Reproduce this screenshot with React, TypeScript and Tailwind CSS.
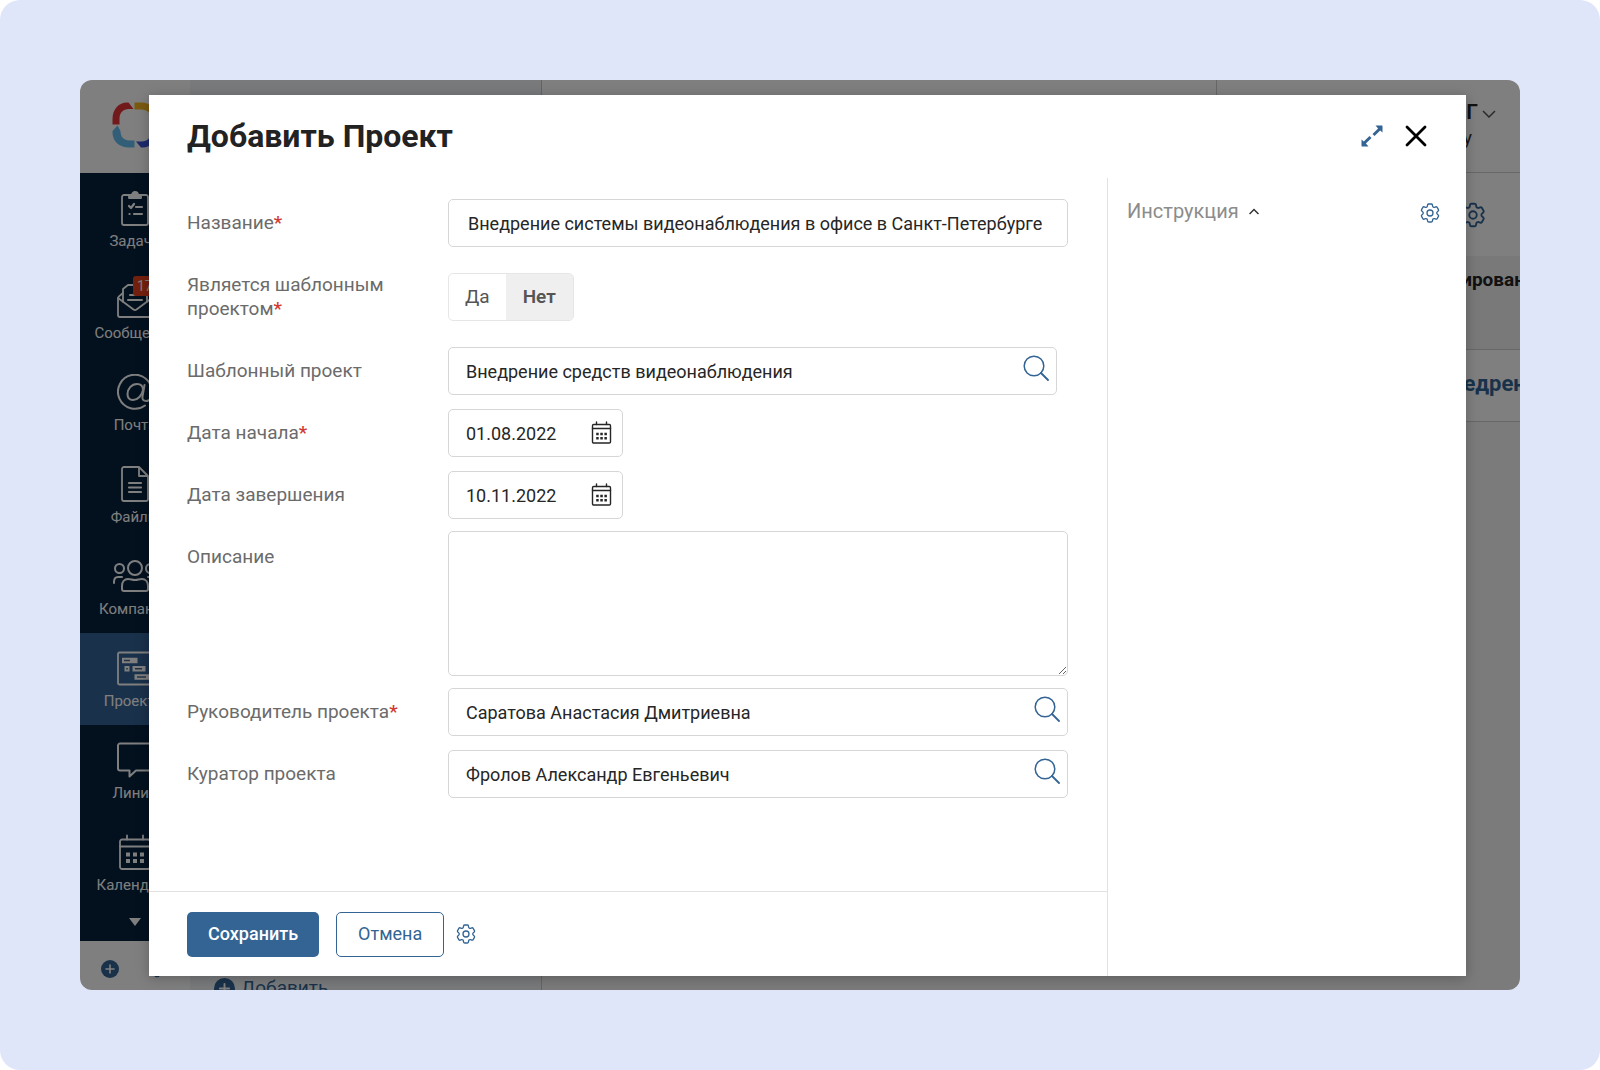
import { useState } from "react";
import type { ReactNode } from "react";
import { HiOutlineCog6Tooth } from "react-icons/hi2";

const FIELD =
  "h-12 rounded-[5px] border border-[#d6d6d6] bg-white text-[18px] leading-6 text-[#262626] outline-none";

function ClipboardIcon() {
  return (
    <svg width="36" height="36" viewBox="0 0 36 36" fill="none" stroke="currentColor" strokeWidth="1.8" strokeLinejoin="round" strokeLinecap="round">
      <path d="M12 5H7a2 2 0 0 0-2 2v26a2 2 0 0 0 2 2h22a2 2 0 0 0 2-2V7a2 2 0 0 0-2-2h-5" />
      <path d="M12 8V5h3a3 3 0 0 1 6 0h3v3z" fill="currentColor" />
      <path d="m12 16 2 2 3-4M19 17h6M12.500 24h.1M17 24h8" strokeWidth="2.200" />
    </svg>
  );
}

function MailIcon() {
  return (
    <svg width="36" height="36" viewBox="0 0 36 36" fill="none" stroke="currentColor" strokeWidth="1.8" strokeLinejoin="round" strokeLinecap="round">
      <path d="M6 11 3 13.500a4 4 0 0 0-2 3V33a2 2 0 0 0 2 2h30a2 2 0 0 0 2-2V16.500a4 4 0 0 0-2-3L30 11" />
      <path d="M6 20V7l5-4h14l5 4v13M1 16l15.500 11.500a2.500 2.500 0 0 0 3 0L35 16" />
      <path d="M13 13h11M11 18h14" strokeWidth="2" />
    </svg>
  );
}

function AtIcon() {
  return (
    <svg width="36" height="36" viewBox="0 0 36 36" fill="none" stroke="currentColor" strokeWidth="2" strokeLinecap="round">
      <path d="M28 31.500A17 17 0 1 1 35 18c0 5-2 9-6 9-2.500 0-4-1.500-3.500-4.500L27.500 11" />
      <path d="M26 16c0-4-2.500-6-6-6-5.500 0-9.500 5-9.500 10 0 4 2.500 6 5.500 6 5 0 9-4.500 10-10Z" />
    </svg>
  );
}

function FileIcon() {
  return (
    <svg width="36" height="36" viewBox="0 0 36 36" fill="none" stroke="currentColor" strokeWidth="1.800" strokeLinejoin="round" strokeLinecap="round">
      <path d="M22 1H7a2 2 0 0 0-2 2v30a2 2 0 0 0 2 2h22a2 2 0 0 0 2-2V10zv9h9" />
      <path d="M12 17h12M12 21.500h12M12 26h12" strokeWidth="2.200" />
    </svg>
  );
}

function PeopleIcon() {
  return (
    <svg width="44" height="36" viewBox="0 0 44 36" fill="none" stroke="currentColor" strokeWidth="2" strokeLinejoin="round" strokeLinecap="round">
      <circle cx="22" cy="10" r="7" />
      <circle cx="6.500" cy="10.500" r="4.500" />
      <circle cx="37.500" cy="10.500" r="4.500" />
      <path d="M11 33h22c1.500 0 2-1 2-2v-3c0-4-2.500-7-6-7-3 0-4 1-7 1s-4-1-7-1c-3.500 0-6 3-6 7v3c0 1 .5 2 2 2Z" />
      <path d="M1 25v-1c0-3 1.500-5 4-5h4M43 25v-1c0-3-1.500-5-4-5h-4" />
    </svg>
  );
}

function GanttIcon() {
  return (
    <svg width="36" height="36" viewBox="0 0 36 36" fill="none" stroke="currentColor" strokeWidth="1.800" strokeLinejoin="round">
      <rect x="1" y="2.500" width="34" height="32" rx="1.500" />
      <path d="M5 10.500h15.500M17.500 27h15M15.500 18.800h13M7.500 18.800h5" strokeWidth="5.600" />
      <path d="M7 10.500h6M20 27h9M18 18.800h7M9.200 18.800h1.600" strokeWidth="1.600" stroke="#46678c" />
    </svg>
  );
}

function ChatIcon() {
  return (
    <svg width="36" height="36" viewBox="0 0 36 36" fill="none" stroke="currentColor" strokeWidth="2" strokeLinejoin="round">
      <path d="M3 1.500h30a2 2 0 0 1 2 2v23a2 2 0 0 1-2 2H19L12.500 34.500v-6H3a2 2 0 0 1-2-2v-23a2 2 0 0 1 2-2Z" />
    </svg>
  );
}

function BigCalendarIcon() {
  return (
    <svg width="36" height="36" viewBox="0 0 36 36" fill="none" stroke="currentColor" strokeWidth="1.800" strokeLinejoin="round" strokeLinecap="round">
      <rect x="3" y="5.500" width="30" height="29.500" rx="2" />
      <path d="M3 12.500h30M10 1.500v4M26 1.500v4" />
      <path d="M9 20.500h4M16 20.500h4M23 20.500h4M9 27h4M16 27h4M23 27h4" strokeWidth="4.200" strokeLinecap="butt" />
    </svg>
  );
}

function CalendarIcon() {
  return (
    <svg width="22" height="24" viewBox="0 0 22 24" fill="none" stroke="currentColor" strokeWidth="1.400" strokeLinejoin="round" strokeLinecap="round">
      <rect x="1.500" y="3.500" width="18" height="18.500" rx="1.200" />
      <path d="M1.500 7.500h18M5.500 1v2.500M15.500 1v2.500" />
      <path d="M5.200 13h2.500M9.300 13h2.500M13.400 13h2.500M5.200 17.200h2.500M9.300 17.200h2.500M13.400 17.200h2.500" strokeWidth="2.600" strokeLinecap="butt" />
    </svg>
  );
}

function SearchIcon() {
  return (
    <svg width="26" height="26" viewBox="0 0 26 26" fill="none" stroke="currentColor" strokeWidth="1.500" strokeLinecap="round">
      <circle cx="11" cy="11" r="9.800" />
      <path d="m18 18 7 7" strokeWidth="1.800" />
    </svg>
  );
}

function ExpandIcon() {
  return (
    <svg width="22" height="22" viewBox="0 0 22 22" fill="currentColor">
      <path d="M14.500.5H21a.6.6 0 0 1 .5.500v6.500l-2.300-2-5.700 5.600-2-2 5.600-5.600z" />
      <path d="M7.500 21.500H1a.6.6 0 0 1-.5-.5v-6.500l2.300 2 5.700-5.600 2 2-5.600 5.600z" />
    </svg>
  );
}

function CloseIcon() {
  return (
    <svg width="22" height="22" viewBox="0 0 22 22" fill="none" stroke="currentColor" strokeWidth="2.800" strokeLinecap="round">
      <path d="m2 2 18 18M20 2 2 20" />
    </svg>
  );
}

function PlusBadge({ size }: { size: number }) {
  return (
    <svg width={size} height={size} viewBox="0 0 18 18" className="shrink-0">
      <circle cx="9" cy="9" r="9" fill="#336494" />
      <path d="M9 5v8M5 9h8" stroke="#fff" strokeWidth="1.600" strokeLinecap="round" />
    </svg>
  );
}

function LogoMark() {
  return (
    <svg width="46" height="46" viewBox="0 0 46 46" fill="none">
      <path d="M.5 22.500V17C.5 7 7 .5 15 .5h1.500l5 6.500H17c-6 0-9.500 4-9.500 9.500v6z" fill="#e53238" />
      <path d="M22.500.5H29c10 0 16.500 6.500 16.500 15v1.500L39 22v-5c0-6-4-9.500-9.500-9.500h-7z" fill="#f5b51e" />
      <path d="m.5 29 5-5.500 3 5.500c0 6 3.500 9.500 9 9.500h5v7H17C7 45.500.5 39 .5 30.500z" fill="#64bdf0" />
      <path d="M45.500 23.500V29c0 10-6.500 16.500-15 16.500H29l-5-6h5.500c6 0 9.500-4 9.500-9.500v-6.500z" fill="#3a55d6" />
    </svg>
  );
}

const NAV: { label: string; icon: ReactNode; active?: boolean; badge?: string }[] = [
  { label: "Задачи", icon: <ClipboardIcon /> },
  { label: "Сообщения", icon: <MailIcon />, badge: "17" },
  { label: "Почта", icon: <AtIcon /> },
  { label: "Файлы", icon: <FileIcon /> },
  { label: "Компании", icon: <PeopleIcon /> },
  { label: "Проекты", icon: <GanttIcon />, active: true },
  { label: "Линии", icon: <ChatIcon /> },
  { label: "Календарь", icon: <BigCalendarIcon /> },
];

function Sidebar() {
  return (
    <aside className="flex w-[110px] shrink-0 flex-col bg-white">
      <div className="flex h-[93px] shrink-0 items-center justify-center pb-1">
        <LogoMark />
      </div>
      <nav className="flex flex-col bg-[#06203c] text-white">
        {NAV.map((item) => (
          <a
            key={item.label}
            href="#"
            className={`flex h-[92px] flex-col items-center gap-[5px] pt-[17px] ${item.active ? "bg-[#346297]" : ""}`}
          >
            <span className="relative">
              {item.icon}
              {item.badge && (
                <span className="absolute -top-1.5 left-4 rounded-[3px] bg-[#e8401c] px-1 text-sm leading-5">
                  {item.badge}
                </span>
              )}
            </span>
            <span className="text-[15px] leading-5">{item.label}</span>
          </a>
        ))}
        <button type="button" aria-label="Ещё" className="flex h-8 items-center justify-center pb-1.5">
          <svg width="12" height="8" viewBox="0 0 12 8" fill="currentColor">
            <path d="M0 0h12L6 8z" />
          </svg>
        </button>
      </nav>
      <div className="flex flex-1 items-center gap-7 pt-1.5 pl-[21px]">
        <PlusBadge size={18} />
        <HiOutlineCog6Tooth className="size-5 text-[#336494]" />
      </div>
    </aside>
  );
}

function Backdrop() {
  return (
    <div className="relative col-start-1 row-start-1 flex min-h-0 min-w-0 overflow-hidden" aria-hidden="true">
      <Sidebar />
      <section className="flex w-[352px] shrink-0 flex-col justify-end border-r border-[#c8c8c8] bg-[#f0f4f6]">
        <a href="#" className="-mb-3 flex items-center gap-1.5 pl-6 text-[19px] leading-7 text-[#336494]">
          <PlusBadge size={21} />
          Добавить
        </a>
      </section>
      <section className="flex min-w-0 flex-1 flex-col overflow-hidden bg-[#f7f7f7]">
        <header className="flex h-[93px] shrink-0 border-b border-[#cfcfcf] bg-white">
          <div className="flex-1 border-r border-[#cfcfcf]" />
          <div className="flex w-[303px] items-start justify-end gap-1 pt-5 pr-6 text-right">
            <div>
              <div className="text-[21px] leading-6 font-semibold text-[#222]">Сергей Г</div>
              <div className="pr-1.5 text-[19px] leading-7 text-[#333]">К началу</div>
            </div>
            <svg width="14" height="8" viewBox="0 0 14 8" fill="none" stroke="#555" strokeWidth="1.500" className="mt-2.5">
              <path d="m1 1 6 6 6-6" />
            </svg>
          </div>
        </header>
        <div className="flex h-[83px] shrink-0 items-center justify-end bg-white pr-8">
          <HiOutlineCog6Tooth className="size-[30px] text-[#336494]" />
        </div>
        <div className="flex h-[94px] shrink-0 justify-end border-b border-[#cfcfcf] bg-[#f2f2f2] pt-3">
          <span className="w-[104px] text-[19px] leading-6 font-bold whitespace-nowrap text-[#222]">Планирование</span>
        </div>
        <div className="flex h-[72px] shrink-0 items-center justify-end border-b border-[#cfcfcf] bg-white pb-1">
          <a href="#" className="w-[83px] text-[22px] leading-6 font-bold whitespace-nowrap text-[#336494]">
            Внедрение
          </a>
        </div>
      </section>
      <div className="absolute inset-0 bg-black/50" />
    </div>
  );
}

function Row({
  label,
  htmlFor,
  required,
  top,
  children,
}: {
  label: string;
  htmlFor: string;
  required?: boolean;
  top?: boolean;
  children: ReactNode;
}) {
  return (
    <div className={`flex ${top ? "items-start" : "items-center"}`}>
      <label
        id={`${htmlFor}-label`}
        htmlFor={htmlFor}
        className={`w-[261px] shrink-0 pr-6 text-[19px] leading-6 text-[#6b6b6b] ${top ? "pt-3.5" : ""}`}
      >
        {label}
        {required && <span className="font-medium text-[#cf3a31]">*</span>}
      </label>
      <div className="flex min-w-0 flex-1">{children}</div>
    </div>
  );
}

function LookupField({ id, value, label }: { id: string; value: string; label: string }) {
  return (
    <div className="relative flex-1">
      <input id={id} type="text" defaultValue={value} className={`${FIELD} w-full pr-12 pl-[17px]`} />
      <button type="button" aria-label={label} className="absolute top-2 right-2 text-[#336494]">
        <SearchIcon />
      </button>
    </div>
  );
}

function DateField({ id, value }: { id: string; value: string }) {
  return (
    <div className="relative w-[175px]">
      <input id={id} type="text" defaultValue={value} className={`${FIELD} w-full pr-10 pl-[17px]`} />
      <button type="button" aria-label="Открыть календарь" className="absolute top-3 right-2.5 text-[#262626]">
        <CalendarIcon />
      </button>
    </div>
  );
}

function ProjectDialog() {
  const [template, setTemplate] = useState("no");
  return (
    <div
      role="dialog"
      aria-labelledby="dialog-title"
      className="relative col-start-1 row-start-1 mt-[15px] mr-[54px] mb-3.5 ml-[69px] flex min-w-0 flex-col bg-white shadow-[0_2px_12px_rgba(0,0,0,0.25)]"
    >
      <header className="flex h-[83px] shrink-0 items-center justify-between pr-[39px] pb-0.5 pl-[38px]">
        <h1 id="dialog-title" className="text-[32px] leading-10 font-bold text-[#222]">
          Добавить Проект
        </h1>
        <div className="flex items-center gap-[22px]">
          <button type="button" aria-label="Развернуть" className="text-[#336494]">
            <ExpandIcon />
          </button>
          <button type="button" aria-label="Закрыть" className="text-black">
            <CloseIcon />
          </button>
        </div>
      </header>

      <div className="flex min-h-0 flex-1">
        <form className="flex min-w-0 flex-1 flex-col" onSubmit={(e) => e.preventDefault()}>
          <div className="flex flex-1 flex-col gap-[26px] pt-[21px] pr-[39px] pb-6 pl-[38px]">
            <Row label="Название" htmlFor="name" required>
              <input
                id="name"
                type="text"
                defaultValue="Внедрение системы видеонаблюдения в офисе в Санкт-Петербурге"
                className={`${FIELD} w-full px-[19px]`}
              />
            </Row>
            <Row label="Является шаблонным проектом" htmlFor="is-template" required>
              <div
                id="is-template"
                role="radiogroup"
                aria-labelledby="is-template-label"
                className="flex h-12 overflow-hidden rounded-[5px] border border-[#e6e6e6] text-[19px] leading-6 text-[#555]"
              >
                <label className="relative flex items-center px-4 has-checked:bg-[#efefef] has-checked:font-semibold">
                  <input
                    type="radio"
                    name="template"
                    className="sr-only"
                    checked={template === "yes"}
                    onChange={() => setTemplate("yes")}
                  />
                  Да
                </label>
                <label className="relative flex items-center px-[17px] has-checked:bg-[#efefef] has-checked:font-semibold">
                  <input
                    type="radio"
                    name="template"
                    className="sr-only"
                    checked={template === "no"}
                    onChange={() => setTemplate("no")}
                  />
                  Нет
                </label>
              </div>
            </Row>
            <div className="flex flex-col gap-3.5">
              <div className="pr-[11px]">
                <Row label="Шаблонный проект" htmlFor="template-project">
                  <LookupField id="template-project" value="Внедрение средств видеонаблюдения" label="Найти проект" />
                </Row>
              </div>
              <Row label="Дата начала" htmlFor="start" required>
                <DateField id="start" value="01.08.2022" />
              </Row>
              <div className="flex flex-col gap-3">
                <Row label="Дата завершения" htmlFor="end">
                  <DateField id="end" value="10.11.2022" />
                </Row>
                <Row label="Описание" htmlFor="description" top>
                  <textarea
                    id="description"
                    className="h-[145px] w-full rounded-[5px] border border-[#d6d6d6] p-4 text-[18px] leading-6 outline-none"
                  />
                </Row>
                <div className="flex flex-col gap-3.5">
                  <Row label="Руководитель проекта" htmlFor="manager" required>
                    <LookupField id="manager" value="Саратова Анастасия Дмитриевна" label="Найти руководителя" />
                  </Row>
                  <Row label="Куратор проекта" htmlFor="curator">
                    <LookupField id="curator" value="Фролов Александр Евгеньевич" label="Найти куратора" />
                  </Row>
                </div>
              </div>
            </div>
          </div>
          <footer className="flex h-[85px] shrink-0 items-center border-t border-[#e2e2e2] px-[38px]">
            <button type="submit" className="mr-[17px] h-[45px] rounded-[5px] bg-[#336494] px-[21px] text-[18px] leading-6 font-medium text-white">
              Сохранить
            </button>
            <button type="button" className="mr-2.5 h-[45px] rounded-[5px] border border-[#336494] px-[21px] text-[18px] leading-6 text-[#336494]">
              Отмена
            </button>
            <button type="button" aria-label="Настройки кнопок" className="text-[#336494]">
              <HiOutlineCog6Tooth className="size-6 [stroke-width:1.3]" />
            </button>
          </footer>
        </form>

        <aside className="flex w-[359px] shrink-0 items-start justify-between border-l border-[#e2e2e2] pt-[21px] pr-6 pl-[19px]">
          <button type="button" className="flex items-center gap-2.5 text-xl leading-6 text-[#8c8c8c]">
            Инструкция
            <svg width="10" height="7" viewBox="0 0 10 7" fill="none" stroke="#333" strokeWidth="1.500">
              <path d="m.5 6 4.500-4.500L9.500 6" />
            </svg>
          </button>
          <button type="button" aria-label="Настройки инструкции" className="mt-0.5 text-[#336494]">
            <HiOutlineCog6Tooth className="size-6 [stroke-width:1.3]" />
          </button>
        </aside>
      </div>
    </div>
  );
}

export default function App() {
  return (
    <div className="bg-white font-['Roboto','Inter',sans-serif]">
      <main className="grid min-h-screen rounded-[20px] bg-[#e0e6f9] p-20">
        <div className="grid min-w-0 grid-cols-1 overflow-hidden rounded-xl">
          <Backdrop />
          <ProjectDialog />
        </div>
      </main>
    </div>
  );
}
